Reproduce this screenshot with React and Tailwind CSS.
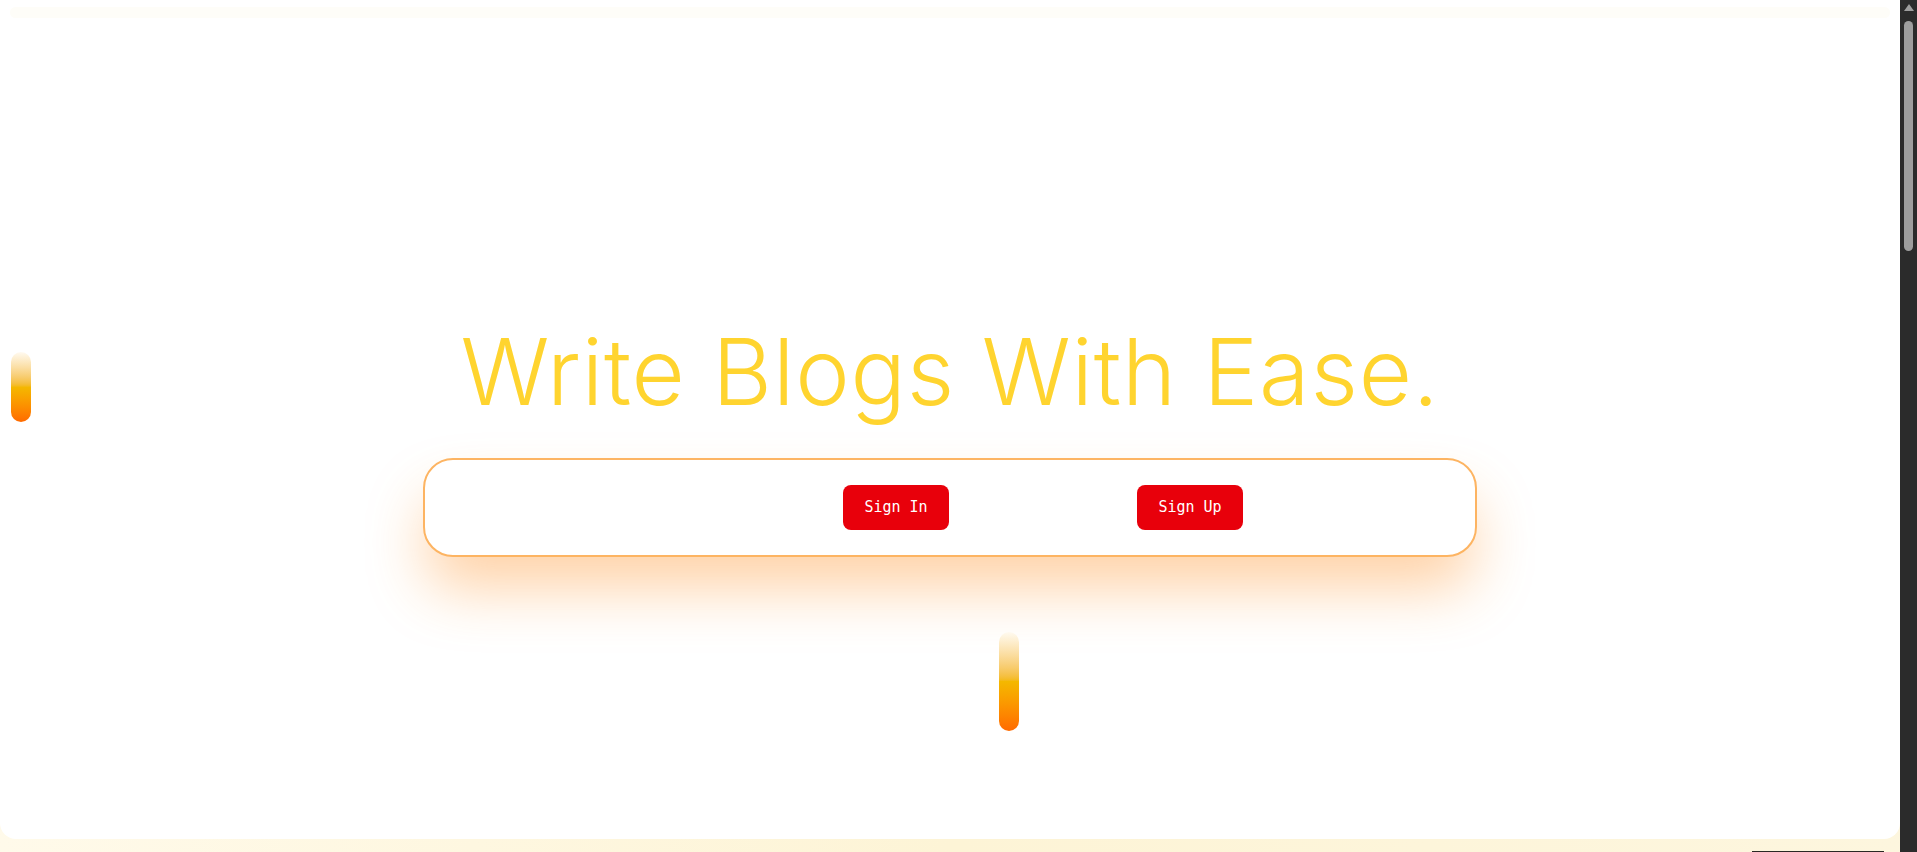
import React from 'react';

const Drop = ({ className }) => (
  <div
    className={`absolute w-[20px] rounded-full bg-gradient-to-b from-[#fffaf0] via-[#f4b800] to-[#ff6a00] ${className}`}
  ></div>
);

const App = () => {
  return (
    <div className="h-screen flex overflow-hidden">
      <div className="flex-1 flex flex-col bg-gradient-to-r from-[#fffaea] via-[#fdf4d6] to-[#fdf6de]">
        {/* Hero */}
        <section className="relative h-[839px] shrink-0 bg-white rounded-b-2xl overflow-hidden">
          <div className="mx-[10px] mt-[7px] h-[11px] rounded-full bg-[#fefdf8]"></div>

          <Drop className="left-[11px] top-[352px] h-[70px]" />
          <Drop className="left-[999px] top-[632px] h-[99px]" />

          <div className="flex flex-col items-center pt-[308px]">
            <h1 className="font-['Inter',sans-serif] font-light text-[92px] tracking-[0.8px] leading-none text-[#ffd42f]">
              Write Blogs With Ease.
            </h1>

            <div className="mt-[40px] w-[1054px] h-[99px] rounded-[30px] border-2 border-[#fdb462] bg-white shadow-[0_35px_60px_-5px_rgba(255,140,30,0.4)] flex items-center pl-[418px] gap-[188px]">
              <button className="w-[106px] h-[45px] rounded-lg bg-[#e8000b] text-white text-[15px] font-['DejaVu_Sans_Mono',monospace]">
                Sign In
              </button>
              <button className="w-[106px] h-[45px] rounded-lg bg-[#e8000b] text-white text-[15px] font-['DejaVu_Sans_Mono',monospace]">
                Sign Up
              </button>
            </div>
          </div>
        </section>

        {/* Next section, just peeking in */}
        <div className="flex-1 flex justify-end items-end pr-[16px]">
          <div className="w-[132px] h-[1px] bg-[#2a2824]"></div>
        </div>
      </div>

      {/* Scrollbar */}
      <aside className="w-[17px] shrink-0 bg-[#2b2b2b] flex flex-col items-center pt-[4px]">
        <div className="w-0 h-0 border-l-[5px] border-r-[5px] border-b-[7px] border-l-transparent border-r-transparent border-b-[#9e9e9e]"></div>
        <div className="mt-[10px] w-[9px] h-[230px] rounded-full bg-[#9e9e9e]"></div>
      </aside>
    </div>
  );
};

export default App;
